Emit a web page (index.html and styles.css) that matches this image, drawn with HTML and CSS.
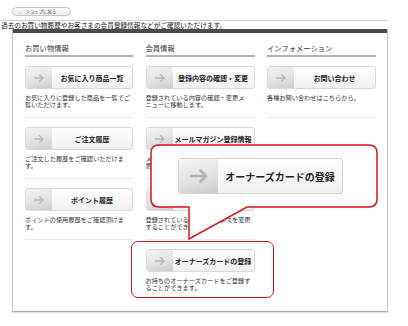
FILE: index.html
```html
<!DOCTYPE html>
<html lang="ja">
<head>
<meta charset="utf-8">
<link rel="stylesheet" href="styles.css">
</head>
<body>
<div class="page">
  <div class="topbar">
    <a class="back"><span class="chev">›</span>ショップに戻る</a>
  </div>
  <p class="intro">過去のお買い物履歴やお客さまの会員登録情報などがご確認いただけます。</p>
  <div class="panel">
    <div class="cols">
      <section class="col">
        <h2>お買い物情報</h2>
        <div class="item">
          <a class="btn"><span class="ico"><svg width="10" height="8" viewBox="0 0 10 8"><path d="M0.5 4H9M5.6 0.8L9 4L5.6 7.2"/></svg></span><span class="lbl">お気に入り商品一覧</span></a>
          <p class="desc">お気に入りに登録した商品を一覧でご覧いただけます。</p>
        </div>
        <div class="item">
          <a class="btn"><span class="ico"><svg width="10" height="8" viewBox="0 0 10 8"><path d="M0.5 4H9M5.6 0.8L9 4L5.6 7.2"/></svg></span><span class="lbl">ご注文履歴</span></a>
          <p class="desc">ご注文した履歴をご確認いただけます。</p>
        </div>
        <div class="item">
          <a class="btn"><span class="ico"><svg width="10" height="8" viewBox="0 0 10 8"><path d="M0.5 4H9M5.6 0.8L9 4L5.6 7.2"/></svg></span><span class="lbl">ポイント履歴</span></a>
          <p class="desc">ポイントの使用履歴をご確認頂けます。</p>
        </div>
      </section>
      <section class="col">
        <h2>会員情報</h2>
        <div class="item">
          <a class="btn"><span class="ico"><svg width="10" height="8" viewBox="0 0 10 8"><path d="M0.5 4H9M5.6 0.8L9 4L5.6 7.2"/></svg></span><span class="lbl">登録内容の確認・変更</span></a>
          <p class="desc">登録されている内容の確認・変更メニューに移動します。</p>
        </div>
        <div class="item">
          <a class="btn"><span class="ico"><svg width="10" height="8" viewBox="0 0 10 8"><path d="M0.5 4H9M5.6 0.8L9 4L5.6 7.2"/></svg></span><span class="lbl">メールマガジン登録情報</span></a>
          <p class="desc">メールマガジンの登録状況の確認・変更ができます。</p>
        </div>
        <div class="item">
          <a class="btn"><span class="ico"><svg width="10" height="8" viewBox="0 0 10 8"><path d="M0.5 4H9M5.6 0.8L9 4L5.6 7.2"/></svg></span><span class="lbl">メールアドレス変更</span></a>
          <p class="desc">登録されているメールアドレスを変更することができます。</p>
        </div>
        <div class="item last">
          <a class="btn"><span class="ico"><svg width="10" height="8" viewBox="0 0 10 8"><path d="M0.5 4H9M5.6 0.8L9 4L5.6 7.2"/></svg></span><span class="lbl">オーナーズカードの登録</span></a>
          <p class="desc">お持ちのオーナーズカードをご登録することができます。</p>
        </div>
      </section>
      <section class="col">
        <h2>インフォメーション</h2>
        <div class="item">
          <a class="btn"><span class="ico"><svg width="10" height="8" viewBox="0 0 10 8"><path d="M0.5 4H9M5.6 0.8L9 4L5.6 7.2"/></svg></span><span class="lbl">お問い合わせ</span></a>
          <p class="desc">各種お問い合わせはこちらから。</p>
        </div>
      </section>
    </div>
  </div>

  <div class="highlight"></div>

  <div class="callout">
    <svg class="bubble" width="229" height="97" viewBox="0 0 229 97"><path d="M9 1H219Q227 1 227 9V55Q227 63 219 63H97L39 95V63H9Q1 63 1 55V9Q1 1 9 1Z"/></svg>
    <a class="btn big"><span class="ico"><svg width="18" height="14" viewBox="0 0 18 14"><path d="M1 7H16M10.5 1.5L16 7L10.5 12.5"/></svg></span><span class="lbl">オーナーズカードの登録</span></a>
  </div>
</div>
</body>
</html>
```

FILE: styles.css
```css
* { box-sizing: border-box; margin: 0; padding: 0; }
body {
  margin: 0;
  background: #fff;
  font-family: "Noto Sans CJK JP", "Noto Sans", sans-serif;
  color: #333;
  width: 408px;
  height: 326px;
  overflow: hidden;
}
.page { position: relative; width: 408px; height: 326px; }

.topbar {
  width: 387px;
  height: 21px;
  padding: 7px 0 0 12px;
  border-bottom: 1px solid #cfcfcf;
}
.back {
  display: flex;
  align-items: center;
  width: 59px;
  height: 9px;
  border: 1px solid #c6c6c6;
  border-radius: 5px;
  background: linear-gradient(#ffffff, #ebebeb);
  font-size: 4.4px;
  line-height: 1;
  color: #444;
  text-decoration: none;
  padding-left: 6px;
}
.chev { color: #aaa; margin-right: 5px; font-size: 5px; }

.intro {
  font-size: 6.65px;
  line-height: 8px;
  padding-left: 1px;
  color: #222;
  white-space: nowrap;
}

.panel {
  margin-left: 12px;
  width: 376px;
  height: 283px;
  border: 1px solid #c4c4c4;
  border-top: 4px solid #4b4b4b;
  border-bottom-color: #a9a9a9;
  border-radius: 2px 2px 0 0;
  box-shadow: 0 1px 1px rgba(0,0,0,0.12);
}
.cols {
  display: grid;
  grid-template-columns: 108px 109px 109px;
  column-gap: 12.5px;
  padding-left: 12px;
}
.col h2 {
  margin-top: 11px;
  font-size: 7.3px;
  font-weight: normal;
  line-height: 9px;
  padding-bottom: 2px;
  border-bottom: 2px solid #b5b5b5;
  color: #333;
}
.item {
  padding: 9px 0;
  border-bottom: 1px solid #ebebeb;
}
.item.last { border-bottom: none; }

.btn {
  display: flex;
  height: 23px;
  border: 1px solid #d9d9d9;
  border-radius: 3px;
  overflow: hidden;
  background: linear-gradient(#ffffff, #f0f0f0);
  text-decoration: none;
}
.ico {
  width: 26px;
  flex: none;
  display: flex;
  align-items: center;
  justify-content: center;
  background: linear-gradient(165deg, #f4f4f4 0%, #e3e3e3 55%, #cccccc 100%);
}
.ico svg path {
  fill: none;
  stroke: #b9b9b9;
  stroke-width: 1.4;
  stroke-linecap: round;
  stroke-linejoin: round;
}
.lbl {
  flex: 1;
  display: flex;
  align-items: center;
  justify-content: center;
  font-size: 7px;
  font-weight: bold;
  color: #222;
  white-space: nowrap;
}
.desc {
  margin-top: 6px;
  min-height: 13px;
  font-size: 6.2px;
  line-height: 6.5px;
  line-break: strict;
  color: #333;
}

.highlight {
  position: absolute;
  left: 131px;
  top: 241px;
  width: 143px;
  height: 57px;
  border: 1.5px solid #d9141b;
  border-radius: 7px;
}

.callout {
  position: absolute;
  left: 150px;
  top: 144px;
  width: 229px;
  height: 97px;
  padding: 14px 0 0 28px;
}
.bubble { position: absolute; left: 0; top: 0; }
.bubble path { fill: #fff; stroke: #d9141b; stroke-width: 1.5; }
.btn.big {
  position: relative;
  width: 165px;
  height: 36px;
  border-color: #d4d4d4;
}
.btn.big .ico { width: 39px; }
.btn.big .ico svg path { stroke-width: 2.6; stroke: #b5b5b5; }
.btn.big .lbl { font-size: 10px; color: #222; }
```
